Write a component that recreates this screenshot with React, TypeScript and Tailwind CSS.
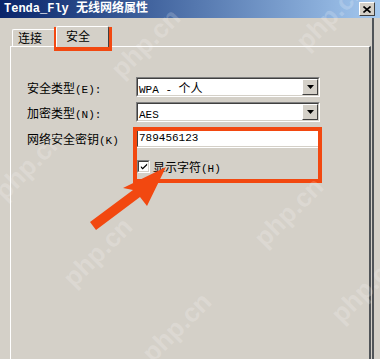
import React from "react";

const mono = { fontFamily: '"Liberation Mono", "Noto Sans CJK SC", monospace' };
const cjk = { fontFamily: '"Noto Sans CJK SC", sans-serif' };

// SimSun-like: CJK at 12px, latin narrower
function Mixed({ text }: { text: string }) {
  const parts = text.split(/([\x20-\x7e]+)/).filter(Boolean);
  return (
    <>
      {parts.map((p, i) =>
        /^[\x20-\x7e]+$/.test(p) ? (
          <span key={i} className="text-[11px]" style={mono}>
            {p}
          </span>
        ) : (
          <span key={i} className="text-[12px]" style={cjk}>
            {p}
          </span>
        )
      )}
    </>
  );
}

function DropButton() {
  return (
    <div className="w-[16px] h-full bg-[#d4d0c8] border-t border-l border-t-white border-l-white border-b border-r border-b-[#404040] border-r-[#404040] flex items-center justify-center">
      <svg width="7" height="4" viewBox="0 0 7 4">
        <path d="M0 0h7L3.5 4z" fill="#000" />
      </svg>
    </div>
  );
}

function Sunken({ children, className = "" }: { children: React.ReactNode; className?: string }) {
  return (
    <div className={`border border-t-[#808080] border-l-[#808080] border-b-white border-r-white ${className}`}>
      <div className="h-full border border-t-[#404040] border-l-[#404040] border-b-[#d4d0c8] border-r-[#d4d0c8] bg-white flex items-center">
        {children}
      </div>
    </div>
  );
}

function Combo({ value }: { value: string }) {
  return (
    <Sunken className="w-[184px] h-[20px]">
      <span className="flex-1 pl-[1px] leading-none text-black">
        <Mixed text={value} />
      </span>
      <DropButton />
    </Sunken>
  );
}

function Watermark({ x, y }: { x: number; y: number }) {
  return (
    <span
      className="absolute text-[26px] font-bold text-white/20 -rotate-45 select-none pointer-events-none leading-none"
      style={{ left: x - 42, top: y - 13, fontFamily: '"Liberation Sans", Arial, sans-serif' }}
    >
      php.cn
    </span>
  );
}

export default function App() {
  const rows = [
    { label: "安全类型(E):", value: "WPA - 个人" },
    { label: "加密类型(N):", value: "AES" },
  ];

  return (
    <div className="w-[380px] h-[359px] bg-[#d4d0c8] relative overflow-hidden flex flex-col text-black" style={cjk}>
      {/* title bar */}
      <div className="h-[18px] flex items-center pl-[4px] pr-[5px] bg-gradient-to-r from-[#0a246a] to-[#a6caf0]">
        <span className="text-[12px] font-bold text-white leading-none" style={mono}>
          Tenda_Fly 无线网络属性
        </span>
        <div className="ml-auto w-[16px] h-[14px] bg-[#d4d0c8] border-t border-l border-t-white border-l-white border-b border-r border-b-[#404040] border-r-[#404040] flex items-center justify-center">
          <svg width="8" height="7" viewBox="0 0 8 7">
            <path d="M0.5 0.5L7.5 6.5M7.5 0.5L0.5 6.5" stroke="#000" strokeWidth="1.6" />
          </svg>
        </div>
      </div>

      <div className="flex-1 flex">
        <div className="w-[10px]" />
        <div className="w-[361px] flex flex-col">
          {/* tabs */}
          <div className="h-[28px] flex items-end pl-[2px]">
            <div className="w-[44px] h-[17px] border-t border-l border-t-white border-l-white border-r border-r-[#404040] rounded-tl-[2px] rounded-tr-[2px] pl-[5px] flex items-center text-[12px] leading-none">
              连接
            </div>
            <div className="relative z-10 -mb-px w-[53px] h-[21px] bg-[#d4d0c8] border-t border-l border-t-white border-l-white border-r border-r-[#404040] rounded-tl-[2px] rounded-tr-[2px] pl-[9px] pb-[2px] flex items-center text-[12px] leading-none">
              安全
            </div>
          </div>

          {/* panel */}
          <div className="flex-1 border-t border-l border-t-white border-l-white border-r-2 border-r-[#505458] pl-[16px] pt-[30px] flex flex-col">
            {rows.map((r, i) => (
              <div key={r.label} className={`flex items-center ${i > 0 ? "mt-[5px]" : ""}`}>
                <span className="w-[109px] leading-none">
                  <Mixed text={r.label} />
                </span>
                <Combo value={r.value} />
              </div>
            ))}
            <div className="flex items-center mt-[6px]">
              <span className="w-[109px] leading-none">
                <Mixed text="网络安全密钥(K)" />
              </span>
              <Sunken className="w-[184px] h-[20px]">
                <span className="pl-[1px] text-[11px] leading-none" style={mono}>
                  789456123
                </span>
              </Sunken>
            </div>
            <div className="flex items-center mt-[9px] ml-[110px]">
              <Sunken className="w-[13px] h-[13px]">
                <svg width="9" height="9" viewBox="0 0 9 9" className="ml-[1px]">
                  <path d="M1 4l2 2 5-5v2l-5 5-2-2z" fill="#000" />
                </svg>
              </Sunken>
              <span className="ml-[3px] leading-none">
                <Mixed text="显示字符(H)" />
              </span>
            </div>
          </div>
        </div>
        <div className="w-[1px]" />
        <div className="w-[2px] bg-[#505458]" />
        <div className="flex-1" />
      </div>

      {/* annotations */}
      <div className="absolute left-[54px] top-[27px] w-[58px] h-[24px] border-4 border-[#f24810] pointer-events-none" />
      <div className="absolute left-[133px] top-[127px] w-[189px] h-[56px] border-4 border-[#f24810] pointer-events-none" />
      <svg className="absolute left-0 top-0 pointer-events-none" width="380" height="359">
        <polygon points="90,222 96,230 140,197 147,206 166,167 123,188 133,190" fill="#f24810" />
      </svg>

      <Watermark x={145} y={43} />
      <Watermark x={330} y={15} />
      <Watermark x={28} y={165} />
      <Watermark x={288} y={212} />
      <Watermark x={97} y={252} />
      <Watermark x={176} y={327} />
      <Watermark x={365} y={288} />
    </div>
  );
}
